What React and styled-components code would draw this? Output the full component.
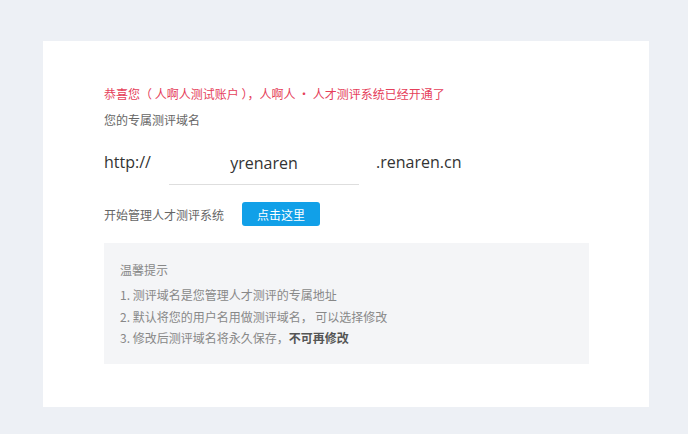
import React from "react";
import styled, { createGlobalStyle } from "styled-components";

const GlobalStyle = createGlobalStyle`
  html, body {
    margin: 0;
    padding: 0;
    background: #edf0f5;
    font-family: "Noto Sans CJK SC", "Noto Sans", sans-serif;
  }
`;

const Page = styled.div`
  padding: 41px 39px 27px 43px;
`;

const Card = styled.div`
  background: #fff;
  width: 606px;
  height: 366px;
  box-sizing: border-box;
  padding: 43px 60px 0 61px;
`;

const Congrats = styled.p`
  margin: 0;
  color: #e5405a;
  font-size: 12px;
  line-height: 20px;
`;

const Label = styled.p`
  margin: 6px 0 0;
  color: #666;
  font-size: 12px;
  line-height: 20px;
`;

const DomainRow = styled.div`
  display: flex;
  align-items: flex-start;
  margin-top: 14px;
  height: 41px;
  font-family: "Open Sans", "Noto Sans CJK SC", sans-serif;
  font-size: 16px;
  color: #333;
`;

const Affix = styled.span`
  line-height: 36px;
  flex-shrink: 0;
  width: ${(p) => p.$width || "auto"};
  margin-left: ${(p) => p.$gap || "0"};
`;

const DomainInput = styled.input`
  flex-shrink: 0;
  width: 190px;
  height: 41px;
  box-sizing: border-box;
  border: none;
  border-bottom: 1px solid #dedede;
  outline: none;
  text-align: center;
  font: inherit;
  color: #333;
  padding: 0 0 2px;
  background: transparent;
`;

const ActionRow = styled.div`
  display: flex;
  align-items: center;
  margin-top: 17px;
  font-size: 12px;
  color: #666;
`;

const Button = styled.button`
  margin-left: 18px;
  width: 78px;
  height: 24px;
  border: none;
  border-radius: 3px;
  background: #11a0e8;
  color: #fff;
  font-family: inherit;
  font-size: 12px;
  cursor: pointer;
`;

const Tips = styled.div`
  margin-top: 17px;
  background: #f4f5f7;
  padding: 17px 16px 18px;
  height: 121px;
  box-sizing: border-box;
  color: #888;
  font-size: 12px;
`;

const TipsTitle = styled.div`
  line-height: 20px;
`;

const TipList = styled.ol`
  margin: 4px 0 0;
  padding: 0;
  list-style: none;
`;

const Tip = styled.li`
  line-height: 21.5px;
  b {
    color: #555;
  }
`;

export default function App() {
  return (
    <>
      <GlobalStyle />
      <Page>
        <Card>
          <Congrats>恭喜您（ 人啊人测试账户 ），人啊人 · 人才测评系统已经开通了</Congrats>
          <Label>您的专属测评域名</Label>
          <DomainRow>
            <Affix $width="65px">http://</Affix>
            <DomainInput defaultValue="yrenaren" />
            <Affix $gap="17px">.renaren.cn</Affix>
          </DomainRow>
          <ActionRow>
            <span>开始管理人才测评系统</span>
            <Button>点击这里</Button>
          </ActionRow>
          <Tips>
            <TipsTitle>温馨提示</TipsTitle>
            <TipList>
              <Tip>1. 测评域名是您管理人才测评的专属地址</Tip>
              <Tip>2. 默认将您的用户名用做测评域名， 可以选择修改</Tip>
              <Tip>
                3. 修改后测评域名将永久保存，<b>不可再修改</b>
              </Tip>
            </TipList>
          </Tips>
        </Card>
      </Page>
    </>
  );
}
